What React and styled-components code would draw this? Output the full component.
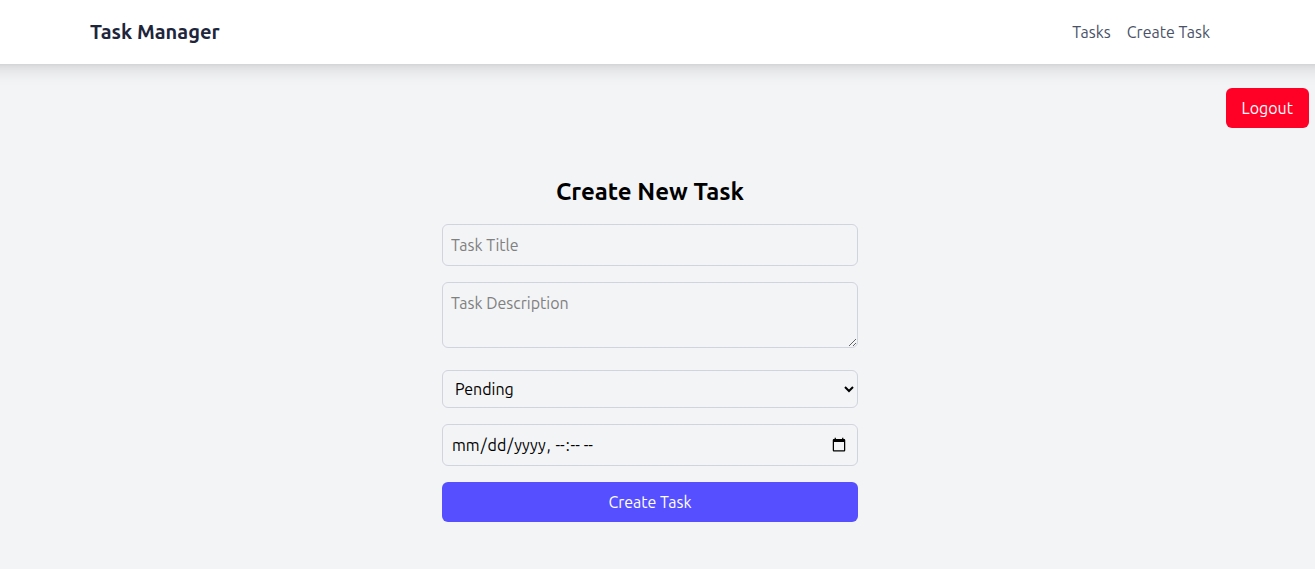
import React, { useState } from "react";
import styled, { createGlobalStyle } from "styled-components";

const GlobalStyle = createGlobalStyle`
  *, *::before, *::after { box-sizing: border-box; }
  body {
    margin: 0;
    background: #f3f4f6;
    color: #000;
    font-family: Ubuntu, "Noto Sans", "Open Sans", sans-serif;
    font-size: 16px;
    line-height: 24px;
  }
  button, input, select, textarea { font: inherit; color: inherit; margin: 0; }
`;

const Header = styled.header`
  padding-right: 15px;
  background: #fff;
  box-shadow: 0 -9px 15px 16px rgba(0, 0, 0, 0.1), 0 -16px 6px 16px rgba(0, 0, 0, 0.1);
`;

const Bar = styled.div`
  display: flex;
  align-items: center;
  justify-content: space-between;
  max-width: 1184px;
  height: 64px;
  margin: 0 auto;
  padding: 0 32px;
`;

const Brand = styled.a`
  color: #1e263c;
  font-size: 20px;
  line-height: 28px;
  font-weight: 600;
  text-decoration: none;
`;

const Nav = styled.nav`
  display: flex;
  gap: 16px;
`;

const NavLink = styled.a`
  color: #4a5267;
  text-decoration: none;
`;

const Actions = styled.div`
  display: flex;
  justify-content: flex-end;
  padding: 24px 6px 0;
`;

const Button = styled.button`
  border: 0;
  border-radius: 6px;
  padding: 8px 16px;
  color: #fff;
  background: ${(p) => (p.$danger ? "#ff0027" : "#554fff")};
  cursor: pointer;
`;

const Content = styled.main`
  padding: 24px 15px 0 0;
`;

const Panel = styled.section`
  max-width: 448px;
  margin: 0 auto;
  padding: 24px 16px;
`;

const Title = styled.h2`
  margin: 0 0 16px;
  font-size: 24px;
  line-height: 32px;
  font-weight: 600;
  text-align: center;
`;

const Form = styled.form`
  display: flex;
  flex-direction: column;
  gap: 16px;
`;

const field = `
  display: block;
  width: 100%;
  border: 1px solid #d1d3de;
  border-radius: 6px;
  padding: 8px;
  background: transparent;
`;

const Input = styled.input`
  ${field}
  height: 42px;
  &::placeholder { color: #808080; }
`;

const TextArea = styled.textarea`
  ${field}
  height: 66px;
  margin-bottom: 6px;
  resize: vertical;
  &::placeholder { color: #808080; }
`;

const Select = styled.select`
  ${field}
  height: 38px;
`;

export default function App() {
  const [status, setStatus] = useState("pending");
  return (
    <>
      <GlobalStyle />
      <Header>
        <Bar>
          <Brand href="#">Task Manager</Brand>
          <Nav>
            <NavLink href="#tasks">Tasks</NavLink>
            <NavLink href="#create">Create Task</NavLink>
          </Nav>
        </Bar>
      </Header>
      <Actions>
        <Button type="button" $danger>Logout</Button>
      </Actions>
      <Content>
        <Panel>
          <Title>Create New Task</Title>
          <Form onSubmit={(e) => e.preventDefault()}>
            <Input type="text" placeholder="Task Title" aria-label="Task Title" />
            <TextArea placeholder="Task Description" aria-label="Task Description" />
            <Select aria-label="Status" value={status} onChange={(e) => setStatus(e.target.value)}>
              <option value="pending">Pending</option>
              <option value="in-progress">In Progress</option>
              <option value="completed">Completed</option>
            </Select>
            <Input type="datetime-local" aria-label="Due date" />
            <Button type="submit">Create Task</Button>
          </Form>
        </Panel>
      </Content>
    </>
  );
}
